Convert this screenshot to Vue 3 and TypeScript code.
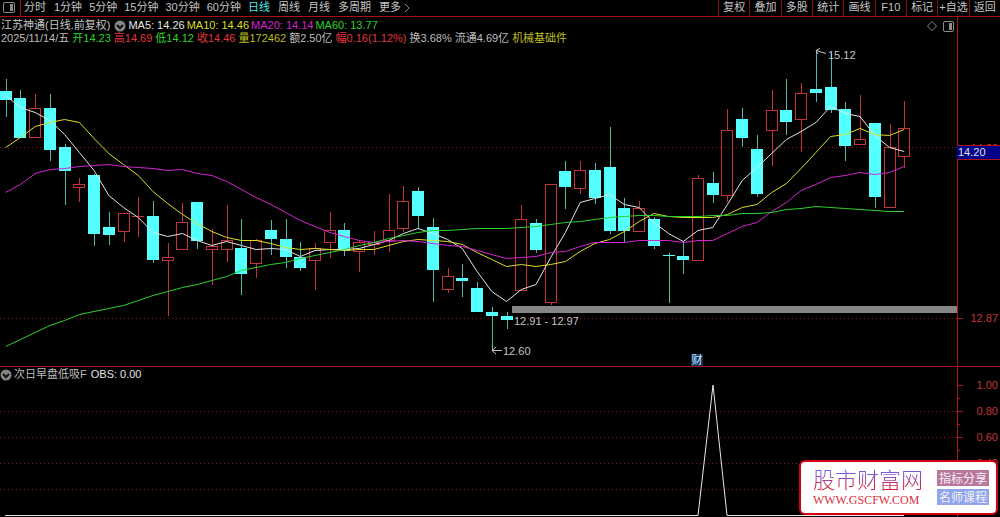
<script setup lang="ts">
type Candle = [kind: 'up' | 'down', high: number, top: number, bottom: number, low: number]

const periods = ['分时', '1分钟', '5分钟', '15分钟', '30分钟', '60分钟', '日线', '周线', '月线', '多周期']
const tools = ['复权', '叠加', '多股', '统计', '画线', 'F10', '标记', '+自选', '返回']

const averages = [
  { text: 'MA5: 14.26', tone: 'white' },
  { text: 'MA10: 14.46', tone: 'yellow' },
  { text: 'MA20: 14.14', tone: 'magenta' },
  { text: 'MA60: 13.77', tone: 'green' },
]

const quote = [
  { text: '2025/11/14/五', tone: 'grey' },
  { text: '开14.23', tone: 'green' },
  { text: '高14.69', tone: 'red' },
  { text: '低14.12', tone: 'green' },
  { text: '收14.46', tone: 'red' },
  { text: '量172462', tone: 'olive' },
  { text: '额2.50亿', tone: 'grey' },
  { text: '幅0.16(1.12%)', tone: 'red' },
  { text: '换3.68%', tone: 'grey' },
  { text: '流通4.69亿', tone: 'grey' },
]

const candles: Candle[] = [
  ['down', 79, 91, 100, 117], ['down', 90, 98, 138, 138], ['up', 94, 108, 137, 137],
  ['down', 94, 108, 150, 161], ['down', 144, 147, 171, 205], ['up', 178, 184, 187, 202],
  ['down', 174, 175, 234, 246], ['down', 212, 227, 235, 245], ['up', 213, 213, 231, 242],
  ['up', 197, 216, 216, 237], ['down', 201, 216, 260, 263], ['up', 243, 257, 260, 316],
  ['up', 203, 222, 249, 249], ['down', 202, 202, 241, 249], ['up', 229, 246, 249, 285],
  ['up', 205, 240, 249, 262], ['down', 219, 248, 274, 295], ['up', 239, 240, 263, 278],
  ['down', 220, 230, 239, 255], ['down', 219, 239, 257, 268], ['down', 242, 257, 268, 271],
  ['up', 243, 248, 260, 290], ['up', 212, 230, 242, 258], ['down', 223, 230, 251, 256],
  ['up', 240, 242, 251, 272], ['up', 231, 242, 244, 255], ['up', 194, 230, 240, 252],
  ['up', 186, 201, 228, 232], ['down', 187, 191, 216, 229], ['down', 218, 227, 270, 302],
  ['up', 268, 276, 289, 293], ['down', 264, 278, 281, 297], ['down', 282, 288, 312, 312],
  ['down', 307, 312, 316, 350], ['down', 312, 316, 320, 329], ['up', 205, 219, 290, 291],
  ['down', 219, 223, 250, 253], ['up', 184, 184, 302, 305], ['down', 161, 171, 187, 209],
  ['up', 161, 170, 188, 194], ['down', 163, 170, 198, 204], ['down', 127, 167, 231, 234],
  ['down', 198, 208, 231, 242], ['up', 201, 208, 231, 231], ['down', 217, 219, 246, 249],
  ['down', 253, 255, 256, 303], ['down', 241, 256, 260, 274], ['up', 175, 178, 260, 260],
  ['down', 172, 183, 195, 203], ['up', 109, 130, 195, 202], ['down', 108, 119, 138, 147],
  ['down', 135, 149, 194, 197], ['up', 90, 110, 130, 166], ['down', 79, 110, 122, 135],
  ['up', 83, 93, 119, 152], ['down', 50, 89, 93, 102], ['down', 52, 87, 110, 113],
  ['down', 102, 109, 146, 161], ['up', 95, 139, 144, 144], ['down', 123, 123, 197, 208],
  ['up', 124, 147, 207, 207], ['up', 101, 128, 156, 168],
]

const ma5 = [95, 107, 112, 120, 134, 152, 170, 195, 207, 217, 232, 236, 233, 240, 245, 241, 245, 249, 248, 249, 256, 250, 249, 249, 248, 244, 240, 233, 228, 233, 239, 248, 271, 291, 301, 289, 284, 257, 232, 202, 198, 194, 204, 207, 222, 233, 241, 230, 227, 204, 180, 167, 153, 139, 131, 122, 106, 113, 116, 135, 147, 151]
const ma10 = [147, 137, 126, 122, 119, 122, 138, 153, 164, 175, 191, 203, 214, 223, 231, 237, 240, 240, 243, 247, 249, 248, 249, 250, 249, 249, 245, 241, 239, 240, 241, 244, 252, 259, 266, 264, 266, 264, 261, 251, 243, 239, 231, 221, 213, 216, 217, 217, 217, 214, 207, 204, 192, 183, 168, 152, 136, 134, 128, 134, 135, 129]
const ma20 = [192, 184, 173, 169, 168, 166, 165, 164, 166, 167, 168, 170, 169, 173, 175, 181, 189, 197, 204, 212, 220, 226, 232, 236, 240, 242, 241, 240, 241, 243, 245, 246, 250, 254, 258, 257, 256, 252, 251, 246, 242, 242, 242, 240, 240, 240, 242, 240, 240, 233, 226, 222, 211, 202, 190, 184, 177, 175, 172, 174, 172, 166]
const ma60 = [346, 339, 332, 325, 320, 314, 311, 308, 305, 300, 295, 291, 287, 284, 280, 276, 270, 267, 264, 262, 258, 255, 252, 249, 245, 242, 238, 235, 232, 230, 230, 229, 228, 228, 228, 227, 226, 224, 222, 221, 219, 217, 216, 215, 215, 216, 216, 216, 215, 215, 213, 213, 212, 209, 208, 206, 207, 208, 209, 210, 211, 211]

const slotX = (i: number) => 5.7 + i * 14.73
const points = (ys: number[]) => ys.map((y, i) => `${slotX(i).toFixed(1)},${y + 0.5}`).join(' ')

const bars = candles.map(([kind, high, top, bottom, low], i) => ({
  kind, high, top, bottom, low, x: Math.round(slotX(i)),
}))

const lines = [
  { tone: 'white', points: points(ma5) },
  { tone: 'yellow', points: points(ma10) },
  { tone: 'magenta', points: points(ma20) },
  { tone: 'green', points: points(ma60) },
]

const scale = [
  { y: 385, label: '1.00' },
  { y: 411, label: '0.80' },
  { y: 437, label: '0.60' },
  { y: 463, label: '0.40' },
]
</script>

<template>
  <main class="terminal">
    <header class="toolbar">
      <button class="layout" aria-label="布局">
        <svg viewBox="0 0 12 11" width="12" height="11">
          <rect x="0.5" y="0.5" width="11" height="10" rx="1.5" class="outline" />
          <rect x="7" y="2" width="3" height="7" class="solid" />
        </svg>
      </button>
      <nav class="periods">
        <button
          v-for="p in periods"
          :key="p"
          :class="{ minute: p.endsWith('分钟'), active: p === '日线' }"
        >{{ p }}</button>
        <button class="more">更多
          <svg viewBox="0 0 6 10" width="6" height="10"><path d="M1 1 L5 5 L1 9" class="outline" /></svg>
        </button>
      </nav>
      <div class="tools">
        <button v-for="t in tools" :key="t">{{ t }}</button>
      </div>
    </header>

    <section class="pane">
      <div class="info">
        <div class="row">
          <h1>江苏神通(日线.前复权)</h1>
          <button class="drop" aria-label="指标菜单">
            <svg viewBox="0 0 12 12" width="12" height="12">
              <circle cx="6" cy="6" r="5.5" class="disc" /><path d="M3 5 L6 8 L9 5" class="tick" />
            </svg>
          </button>
          <span v-for="a in averages" :key="a.text" class="average" :class="a.tone">{{ a.text }}</span>
          <span class="corner">
            <svg viewBox="0 0 10 10" width="10" height="10"><path d="M5 0.5 L9.5 5 L5 9.5 L0.5 5 Z" class="outline" /></svg>
            <svg viewBox="0 0 11 11" width="11" height="11">
              <rect x="0.5" y="0.5" width="10" height="10" rx="1.5" class="outline" />
              <rect x="6" y="2" width="3" height="7" class="solid" />
            </svg>
          </span>
        </div>
        <div class="row quote">
          <span v-for="q in quote" :key="q.text" :class="q.tone">{{ q.text }}</span>
          <a href="#" class="olive">机械基础件</a>
        </div>
      </div>

      <svg class="chart" viewBox="0 45 1000 321" role="img" aria-label="日线K线图">
        <path d="M0 147.5 H957 M0 318.5 H957" class="grid" />
        <path d="M957.5 45 V366 M958 318.5 H963" class="axis" />
        <g v-for="b in bars" :key="b.x" :class="b.kind" class="candle">
          <template v-if="b.kind === 'down'">
            <rect class="wick" :x="b.x" :y="b.high" width="1" :height="b.low - b.high" />
            <rect class="body" :x="b.x - 6" :y="b.top" width="12" :height="b.bottom - b.top" />
          </template>
          <template v-else>
            <path :d="`M${b.x + 0.5} ${b.high} V${b.top} M${b.x + 0.5} ${b.bottom} V${b.low}`" />
            <rect :x="b.x - 5.5" :y="b.top + 0.5" width="11" :height="b.bottom - b.top" />
            <path v-if="b.top === b.bottom" :d="`M${b.x - 6} ${b.top + 0.5} H${b.x + 6}`" />
          </template>
        </g>
        <rect x="512" y="306" width="445" height="7" class="gap-band" />
        <polyline v-for="l in lines" :key="l.tone" :points="l.points" class="line" :class="l.tone" />
        <path d="M826 53.5 L816 50.5 M820 48.5 L816 50.5 L818 54" class="arrow" />
        <path d="M502 350.5 H492 M496 347 L492 350.5 L496 354" class="arrow" />
        <text x="828" y="59" class="note">15.12</text>
        <text x="503" y="355" class="note">12.60</text>
        <text x="514" y="325" class="note">12.91 - 12.97</text>
        <rect x="691" y="354" width="12" height="12" class="event" />
        <text x="697" y="364" class="event-text">财</text>
        <text x="998" y="152" class="price">14.20</text>
        <text x="998" y="322" class="price">12.87</text>
        <rect x="957" y="145" width="43" height="15" class="cursor" />
        <path d="M957 145.5 H1000 M957 159.5 H1000" class="axis" />
        <text x="958" y="156" class="cursor-text">14.20</text>
      </svg>
    </section>

    <section class="pane lower">
      <div class="info">
        <div class="row">
          <button class="drop" aria-label="副图菜单">
            <svg viewBox="0 0 12 12" width="12" height="12">
              <circle cx="6" cy="6" r="5.5" class="disc" /><path d="M3 5 L6 8 L9 5" class="tick" />
            </svg>
          </button>
          <span class="grey">次日早盘低吸F</span>
          <span class="average white">OBS: 0.00</span>
        </div>
      </div>
      <svg class="chart" viewBox="0 382 1000 135" role="img" aria-label="OBS指标">
        <path d="M0 411.5 H957 M0 437.5 H957 M0 463.5 H957 M0 489.5 H957" class="grid" />
        <path d="M957.5 382 V517" class="axis" />
        <g v-for="s in scale" :key="s.y">
          <path :d="`M958 ${s.y + 0.5} H963 M958 ${s.y + 13.5} H960`" class="axis" />
          <text x="998" :y="s.y + 4" class="price">{{ s.label }}</text>
        </g>
        <path d="M5 515.5 H698 L713 385 L727 515.5 H904" class="line signal" />
      </svg>
    </section>

    <aside class="brand">
      <div class="site">
        <strong>股市财富网</strong>
        <a href="#">WWW.GSCFW.COM</a>
      </div>
      <div class="tags">
        <span class="rose">指标分享</span>
        <span class="blue">名师课程</span>
      </div>
    </aside>
  </main>
</template>

<style>
body {
  margin: 0;
  background: #000;
}
</style>

<style scoped>
.terminal {
  position: relative;
  overflow: hidden;
  background: #000;
  color: #c4c4c4;
  font-family: "Liberation Sans", "Noto Sans CJK SC", sans-serif;
  font-size: 11px;
  line-height: 13px;
}

button {
  margin: 0;
  padding: 0;
  border: 0;
  background: none;
  color: inherit;
  font: inherit;
  white-space: nowrap;
  cursor: pointer;
}

a {
  text-decoration: none;
}

svg {
  display: block;
}

.toolbar {
  display: flex;
  box-sizing: border-box;
  height: 17px;
  border-bottom: 1px solid #a81016;
}

.layout {
  display: flex;
  align-items: center;
  padding: 0 5px 2px 3px;
  border-right: 1px solid #a81016;
}

.periods {
  display: flex;
  flex: 1;
  align-items: center;
  gap: 8px;
  padding: 0 0 1px 3px;
}

.periods .minute {
  margin-right: -1px;
}

.periods .active {
  color: #4fe6ea;
}

.more {
  display: flex;
  align-items: center;
  gap: 3px;
}

.tools {
  display: flex;
  width: 282px;
}

.tools button {
  flex: 1;
  padding-bottom: 1px;
  border-left: 1px solid #8a0d12;
}

.outline {
  fill: none;
  stroke: #8c8c8c;
}

.solid {
  fill: #8c8c8c;
}

.disc {
  fill: #858585;
}

.tick {
  fill: none;
  stroke: #111;
  stroke-width: 2;
}

.info {
  box-sizing: border-box;
  width: 95.8%;
  height: 28px;
  padding: 2px 0 0 1px;
  border-right: 1px solid #b01218;
}

.row {
  display: flex;
  align-items: center;
  height: 13px;
  white-space: nowrap;
}

.quote {
  gap: 3px;
}

h1 {
  margin: 0 4px 0 0;
  font-size: 11px;
  font-weight: normal;
}

.average {
  margin-left: 2px;
}

.corner {
  display: flex;
  gap: 6px;
  margin: 2px 3px 0 auto;
}

.lower {
  border-top: 1px solid #a81016;
}

.lower .info {
  height: 15px;
  padding-top: 1px;
}

.lower .row {
  gap: 2px;
  margin-left: -1px;
}

.white { color: #e4e4e4; }
.grey { color: #bdbdbd; }
.yellow { color: #dede28; }
.olive { color: #bcbc20; }
.magenta { color: #d423d4; }
.green { color: #2bd12b; }
.red { color: #e0363c; }

.chart {
  width: 100%;
  height: auto;
  overflow: visible;
}

.grid {
  stroke: #8a1a1a;
  stroke-dasharray: 1 3;
  shape-rendering: crispEdges;
}

.axis {
  fill: none;
  stroke: #b01218;
  shape-rendering: crispEdges;
}

.candle {
  shape-rendering: crispEdges;
}

.up {
  fill: none;
  stroke: #c5333a;
}

.down .wick {
  fill: #50b8ae;
}

.down .body {
  fill: #54ffff;
}

.line {
  fill: none;
  stroke: currentColor;
}

.signal {
  color: #e8e8e8;
}

.gap-band {
  fill: #858585;
}

.arrow {
  fill: none;
  stroke: #c4c4c4;
}

.note {
  fill: #c4c4c4;
}

.event {
  fill: #0b3260;
}

.event-text {
  fill: #d8ecff;
  text-anchor: middle;
}

.price {
  fill: #c5333a;
  text-anchor: end;
}

.cursor {
  fill: #000088;
}

.cursor-text {
  fill: #e0e0e0;
}

.brand {
  position: absolute;
  right: 2px;
  bottom: 2px;
  display: flex;
  box-sizing: border-box;
  align-items: center;
  gap: 14px;
  padding: 6px 7px 6px 12px;
  border: 2px solid #d4000f;
  border-radius: 6px;
  background: #fff;
}

.site {
  display: flex;
  flex-direction: column;
}

.site strong {
  background: linear-gradient(#7a5ce0 20%, #d8203c 80%);
  background-clip: text;
  color: transparent;
  font-size: 22px;
  font-weight: 300;
  line-height: 25px;
}

.site a {
  color: #d8303c;
  font-family: "Liberation Serif", serif;
  font-size: 12px;
  line-height: 14px;
}

.tags {
  display: flex;
  flex-direction: column;
  gap: 3px;
  font-family: "Noto Sans CJK SC", sans-serif;
  font-size: 12px;
  line-height: 16px;
  color: #f6eefa;
}

.tags span {
  padding: 0 2px;
}

.rose {
  background: #b8789c;
}

.blue {
  background: #8fa6ea;
}
</style>
